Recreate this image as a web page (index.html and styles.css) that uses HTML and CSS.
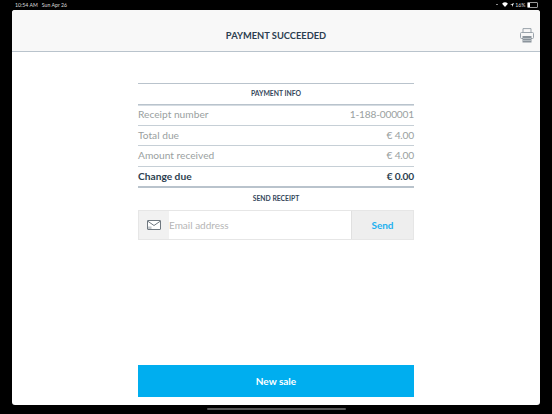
FILE: index.html
```html
<!DOCTYPE html>
<html lang="en">
<head>
    <meta charset="UTF-8">
    <title>Payment succeeded</title>
    <link rel="stylesheet" href="styles.css">
</head>
<body>
    <div class="status-bar">
        <div class="status-time"><span>10:54 AM</span><span>Sun Apr 26</span></div>
        <div class="status-icons">
            <div class="status-dot"></div>
            <svg class="status-wifi" width="6" height="5" viewBox="0 0 7 6"><path d="M0 2a5 5 0 0 1 7 0L3.5 6z" fill="#fff"/></svg>
            <svg class="status-arrow" width="4" height="4" viewBox="0 0 5 5"><path d="M5 0 0 2.2h2.6V5z" fill="#fff"/></svg>
            <span>16%</span>
            <div class="battery"><div class="battery-level"></div></div>
        </div>
    </div>

    <div class="sheet">
        <header class="sheet-header">
            <h1>PAYMENT SUCCEEDED</h1>
            <svg class="print-icon" width="14" height="15" viewBox="0 0 14 15">
                <path d="M3 5V.6h8V5" fill="none" stroke="#9aa3ab"/>
                <rect x=".5" y="4.5" width="13" height="6" rx="1" fill="#f7f7f7" stroke="#9aa3ab"/>
                <rect x="2.5" y="8" width="9" height="6.5" fill="#8b949c"/>
                <path d="M3 10.5h8M3 12.5h8" stroke="#c9ced2" stroke-width=".7"/>
            </svg>
        </header>

        <main class="content">
            <h2 class="section-title section-title-first">PAYMENT INFO</h2>
            <div class="row"><span>Receipt number</span><span class="row-value">1-188-000001</span></div>
            <div class="row"><span>Total due</span><span class="row-value">€ 4.00</span></div>
            <div class="row"><span>Amount received</span><span class="row-value">€ 4.00</span></div>
            <div class="row row-total"><span>Change due</span><span class="row-value">€ 0.00</span></div>

            <h2 class="section-title">SEND RECEIPT</h2>
            <div class="receipt-form">
                <div class="mail-box">
                    <svg width="14" height="10" viewBox="0 0 14 10">
                        <rect x=".5" y=".5" width="13" height="9" rx=".5" fill="#fff" stroke="#6f7880"/>
                        <path d="M.5 1 7 5.5 13.500 1" fill="none" stroke="#6f7880"/>
                        <path d="M1 6.500h3.500V9H1z" fill="#c4c8cc"/>
                    </svg>
                </div>
                <div class="email-field">Email address</div>
                <div class="send-btn">Send</div>
            </div>

            <div class="new-sale">New sale</div>
        </main>
    </div>

    <div class="home-bar"></div>
</body>
</html>
```

FILE: styles.css
```css
html, body {
    margin: 0;
    height: 100%;
}
body {
    width: 552px;
    height: 414px;
    overflow: hidden;
    background: #000;
    font-family: Lato, "Open Sans", sans-serif;
    display: flex;
    flex-direction: column;
    align-items: center;
}
.status-bar {
    width: 100%;
    height: 10px;
    box-sizing: border-box;
    padding: 0 14px 1px 15px;
    display: flex;
    justify-content: space-between;
    align-items: center;
    color: #ddd;
    font-size: 5.2px;
}
.status-time {
    display: flex;
    gap: 4px;
}
.status-icons {
    display: flex;
    align-items: center;
    gap: 1.5px;
}
.status-dot {
    width: 2px;
    height: 1px;
    margin-right: 3px;
    background: #888;
}
.battery {
    width: 9px;
    height: 4px;
    border: 1px solid #999;
    border-radius: 1px;
}
.battery-level {
    width: 2px;
    height: 4px;
    background: #fff;
}
.sheet {
    width: 528px;
    height: 395px;
    background: #fff;
    border-radius: 3px;
    overflow: hidden;
    display: flex;
    flex-direction: column;
}
.sheet-header {
    height: 41px;
    flex-shrink: 0;
    position: relative;
    background: #f8f8f8;
    border-bottom: 1px solid #b9c3cc;
    display: flex;
    align-items: center;
    justify-content: center;
}
.sheet-header h1 {
    margin: 10px 0 0;
    font-size: 9.3px;
    font-weight: 700;
    color: #2c3e50;
}
.print-icon {
    position: absolute;
    right: 6px;
    top: 18px;
}
.content {
    flex: 1;
    width: 276px;
    margin: 0 auto;
    padding-top: 31px;
    display: flex;
    flex-direction: column;
}
.section-title {
    margin: 0;
    height: 22px;
    line-height: 21px;
    text-align: center;
    font-size: 6.8px;
    font-weight: 700;
    color: #34465a;
}
.section-title-first {
    height: 20px;
    line-height: 19px;
    border-top: 1px solid #b9c3cc;
    border-bottom: 1px solid #b9c3cc;
    box-shadow: 0 1px 0 #d5dce2;
}
.row {
    height: 20.5px;
    box-sizing: border-box;
    padding-bottom: 1px;
    display: flex;
    justify-content: space-between;
    align-items: center;
    border-bottom: 1px solid #c6cfd6;
    font-size: 10.2px;
    color: #9a9f9f;
}
.row-value {
    letter-spacing: -0.2px;
}
.row-total {
    height: 21px;
    border-bottom: 2px solid #b9c3cc;
    font-weight: 700;
    color: #2c3e50;
}
.receipt-form {
    height: 30px;
    display: flex;
    border: 1px solid #e6e6e6;
    box-sizing: border-box;
}
.mail-box {
    width: 30px;
    background: #f1f1f1;
    display: flex;
    align-items: center;
    justify-content: center;
}
.email-field {
    flex: 1;
    display: flex;
    align-items: center;
    font-size: 10px;
    color: #b5b5b5;
}
.send-btn {
    width: 61px;
    background: #eee;
    border-left: 1px solid #e0e0e0;
    display: flex;
    align-items: center;
    justify-content: center;
    font-size: 10px;
    font-weight: 700;
    color: #1eb1ee;
}
.new-sale {
    margin-top: 125px;
    height: 32px;
    flex-shrink: 0;
    background: #00aeef;
    display: flex;
    align-items: center;
    justify-content: center;
    font-size: 10px;
    font-weight: 700;
    color: #fff;
}
.home-bar {
    width: 139px;
    height: 2px;
    margin-top: 3px;
    background: #555;
    border-radius: 1px;
}
```
